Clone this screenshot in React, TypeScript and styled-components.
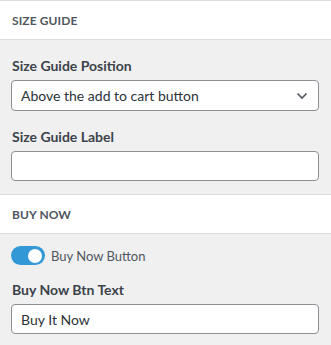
import styled, { createGlobalStyle } from "styled-components";

const GlobalStyle = createGlobalStyle`
  body {
    margin: 0;
    background: #f0f0f1;
    font-family: Lato, "Open Sans", sans-serif;
  }
`;

const Panel = styled.div`
  width: 331px;
  height: 345px;
  background: #f0f0f1;
  overflow: hidden;
`;

const SectionHeader = styled.div`
  height: 38px;
  display: flex;
  align-items: center;
  padding: 0 12px;
  background: #fff;
  border-top: 1px solid #dcdcde;
  border-bottom: 1px solid #dcdcde;
  font-size: 12px;
  font-weight: 700;
  letter-spacing: 0.1px;
  text-transform: uppercase;
  color: #50575e;
`;

const Body = styled.div<{ $top: number; $bottom: number }>`
  padding: ${(p) => p.$top}px 12px ${(p) => p.$bottom}px 11px;
`;

const Field = styled.div`
  display: flex;
  flex-direction: column;
  & + & {
    margin-top: 16px;
  }
`;

const Label = styled.label`
  font-size: 14px;
  line-height: 20px;
  font-weight: 700;
  color: #3c434a;
  padding-left: 1px;
  margin-bottom: 4px;
`;

const Select = styled.div`
  height: 29px;
  border: 1px solid #8c8f94;
  border-radius: 4px;
  background: #fff;
  display: flex;
  align-items: center;
  justify-content: space-between;
  padding: 0 10px 0 9px;
  font-size: 14px;
  color: #2c3338;
`;

const Input = styled.input`
  box-sizing: border-box;
  height: 30px;
  border: 1px solid #8c8f94;
  border-radius: 4px;
  background: #fff;
  padding: 0 9px;
  font-family: inherit;
  font-size: 14px;
  color: #2c3338;
  outline: none;
`;

const ToggleRow = styled.div`
  display: flex;
  align-items: center;
  gap: 6px;
  margin-bottom: 15px;
`;

const Switch = styled.span`
  width: 34px;
  height: 19px;
  border-radius: 10px;
  background: #3399d6;
  display: flex;
  align-items: center;
  justify-content: flex-end;
  padding-right: 3px;
  box-sizing: border-box;
`;

const Knob = styled.span`
  width: 14px;
  height: 14px;
  border-radius: 50%;
  background: #fff;
`;

const ToggleText = styled.span`
  font-size: 13px;
  color: #50575e;
`;

const Chevron = () => (
  <svg width="12" height="8" viewBox="0 0 12 8">
    <path d="M1.5 1.5 L6 6 L10.5 1.5" fill="none" stroke="#50575e" strokeWidth="1.6" />
  </svg>
);

export default function App() {
  return (
    <Panel>
      <GlobalStyle />
      <SectionHeader>Size Guide</SectionHeader>
      <Body $top={16} $bottom={13}>
        <Field>
          <Label>Size Guide Position</Label>
          <Select>
            <span>Above the add to cart button</span>
            <Chevron />
          </Select>
        </Field>
        <Field>
          <Label>Size Guide Label</Label>
          <Input defaultValue="" />
        </Field>
      </Body>
      <SectionHeader>Buy Now</SectionHeader>
      <Body $top={12} $bottom={10}>
        <ToggleRow>
          <Switch>
            <Knob />
          </Switch>
          <ToggleText>Buy Now Button</ToggleText>
        </ToggleRow>
        <Field>
          <Label>Buy Now Btn Text</Label>
          <Input defaultValue="Buy It Now" />
        </Field>
      </Body>
    </Panel>
  );
}
